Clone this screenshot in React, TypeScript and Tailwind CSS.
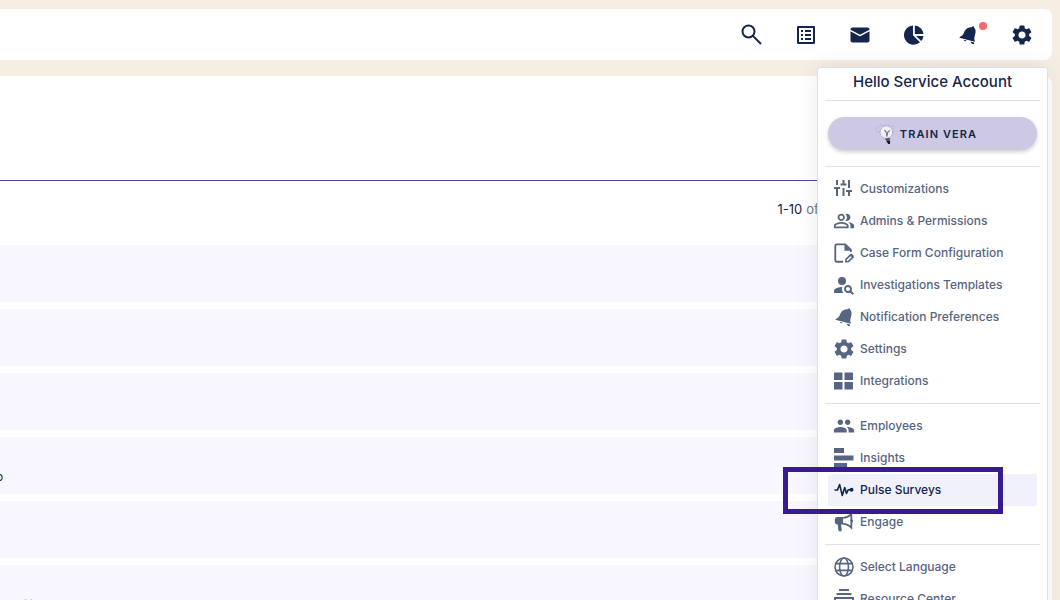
import React from 'react';
import { MdOutlineListAlt, MdOutlinePeopleAlt, MdPeople, MdPersonSearch, MdSettings } from 'react-icons/md';

interface IconProps {
    className?: string;
}

interface MenuItem {
    id: string;
    label: string;
    icon: React.FC<IconProps>;
    active?: boolean;
}

const SearchIcon: React.FC<IconProps> = ({ className }) => (
    <svg className={className} viewBox="0 0 24 24" fill="none" stroke="currentColor" strokeWidth="2">
        <circle cx="8.500" cy="8.500" r="6" />
        <path d="M12.900 12.900 21 21" />
    </svg>
);

const ListIcon: React.FC<IconProps> = ({ className }) => <MdOutlineListAlt className={className} />;

const MailIcon: React.FC<IconProps> = ({ className }) => (
    <svg className={className} viewBox="0 0 24 24" fill="currentColor">
        <path d="M4.500 4.500h15a2 2 0 0 1 2 2v.3L12 11.800 2.500 6.800v-.3a2 2 0 0 1 2-2Z" />
        <path d="m2.500 8.300 8.700 4.800a1.700 1.700 0 0 0 1.600 0l8.700-4.800v9.200a2 2 0 0 1-2 2h-15a2 2 0 0 1-2-2Z" />
    </svg>
);

const PieIcon: React.FC<IconProps> = ({ className }) => (
    <svg className={className} viewBox="0 0 24 24" fill="currentColor">
        <path d="M11 2.500V12.300l7 6.900A9.600 9.600 0 1 1 11 2.500Z" />
        <path d="M12.800 2.500a9.600 9.600 0 0 1 8.700 8.600h-8.700Z" />
        <path d="M14 12.900h7.500a9.600 9.600 0 0 1-2.300 5.100Z" />
    </svg>
);

const BellIcon: React.FC<IconProps> = ({ className }) => (
    <svg className={`${className} p-0.5`} viewBox="0 0 24 24" fill="currentColor">
        <path d="M18.300 1l1 2c1.700 1.800 2.200 4.300 1.600 6.700l-1.300 5.700c-.2 1-.1 2 .3 3l.4 1.600L1.500 15.200l1.500-1.300c1.500-.7 2.700-1.900 3.500-3.400l1.400-3.100c1.300-2.500 3.900-4.400 6.800-4.600l1.900-.1Z" />
        <path d="m6.800 17.800 3.500.9a2 2 0 0 1-3.500-.9Zm8.200 2 4.300 1.100-.3 2.200c-2-.1-3.500-1.500-4-3.300Z" />
    </svg>
);

const GearIcon: React.FC<IconProps> = ({ className }) => <MdSettings className={className} />;

const TuneIcon: React.FC<IconProps> = ({ className }) => (
    <svg className={className} viewBox="0 0 24 24" fill="none" stroke="currentColor" strokeWidth="2">
        <path d="M5 3v5M2 11h6M5 11v8" />
        <path d="M11.500 3v5M8.500 7.500h6M11.500 11v8" />
        <path d="M17 3v8M14 14h6M17 14v5" />
    </svg>
);

const AdminsIcon: React.FC<IconProps> = ({ className }) => <MdOutlinePeopleAlt className={`${className} p-px`} />;

const FormIcon: React.FC<IconProps> = ({ className }) => (
    <svg className={`${className} p-px`} viewBox="0 0 24 24">
        <path
            d="M11 21.500H4a1.500 1.500 0 0 1-1.500-1.500V4A1.500 1.500 0 0 1 4 2.500h9.500L19.500 8.500V11"
            fill="none"
            stroke="currentColor"
            strokeWidth="2"
        />
        <path d="M12.500 2.500v7h7Z" fill="currentColor" />
        <path d="m14 21.500.3-2.700 5-4.800 2.500 2.500-5 4.800Z" fill="none" stroke="currentColor" strokeWidth="1.800" />
        <path d="m18.800 14 1.500-1.500 2.500 2.700-1.300 1.500Z" fill="currentColor" />
    </svg>
);

const InvestigateIcon: React.FC<IconProps> = ({ className }) => <MdPersonSearch className={className} />;

const IntegrationsIcon: React.FC<IconProps> = ({ className }) => (
    <svg className={className} viewBox="0 0 24 24" fill="currentColor">
        <rect x="2" y="3.500" width="8.500" height="7.500" rx=".6" />
        <rect x="12.500" y="3.500" width="8.500" height="7.500" rx=".6" />
        <rect x="2" y="13" width="8.500" height="7.500" rx=".6" />
        <rect x="12.500" y="13" width="8.500" height="7.500" rx=".6" />
    </svg>
);

const EmployeesIcon: React.FC<IconProps> = ({ className }) => <MdPeople className={`${className} p-px`} />;

const InsightsIcon: React.FC<IconProps> = ({ className }) => (
    <svg className={className} viewBox="0 0 24 24" fill="currentColor">
        <path d="M2 2h10v5H2ZM2 9.500h19.500v5H2ZM2 17h13v5H2Z" />
    </svg>
);

const PulseIcon: React.FC<IconProps> = ({ className }) => (
    <svg className={className} viewBox="0 0 24 24" fill="none" stroke="currentColor" strokeWidth="1.600" strokeLinejoin="round">
        <path d="M2.500 12h3L7.600 6.500l2.700 11 2.400-8 1.800 6 1.800-3.800H19" />
        <circle cx="19.500" cy="11.800" r="2" fill="currentColor" stroke="none" />
    </svg>
);

const EngageIcon: React.FC<IconProps> = ({ className }) => (
    <svg className={`${className} p-px`} viewBox="0 0 24 24">
        <path
            d="M10 6.500H5a3 3 0 0 0-3 3v2.300a3 3 0 0 0 3 3l1 6.400a1 1 0 0 0 1 .8h1.600a1 1 0 0 0 1-1.200l-.9-6H11v-8.300Z"
            fill="currentColor"
        />
        <path d="M11 7.500c3 0 6.500-1.600 9-4v14.700c-2.500-2.500-6-4.200-9-4.200" fill="none" stroke="currentColor" strokeWidth="2" />
        <path d="M20 9a2 2 0 0 1 0 4Z" fill="currentColor" />
    </svg>
);

const GlobeIcon: React.FC<IconProps> = ({ className }) => (
    <svg className={`${className} p-px`} viewBox="0 0 24 24" fill="none" stroke="currentColor" strokeWidth="1.700">
        <circle cx="12" cy="12" r="9.800" />
        <ellipse cx="12" cy="12" rx="4.800" ry="9.800" />
        <path d="M3 8.300h18M3 15.700h18" />
    </svg>
);

const ResourceIcon: React.FC<IconProps> = ({ className }) => (
    <svg className={className} viewBox="0 0 24 24" fill="none" stroke="currentColor" strokeWidth="2">
        <path d="M7 3h10M4.500 7h15M3 11h18v9a1.500 1.500 0 0 1-1.500 1.500h-15A1.500 1.500 0 0 1 3 20ZM3 14h5a4 4 0 0 0 8 0h5" />
    </svg>
);

const BulbIcon: React.FC<IconProps> = ({ className }) => (
    <svg className={className} viewBox="0 0 24 24" fill="none">
        <path d="M9 9 5 10 2 8V5l5-2 7-1 7 1v7" stroke="#c6a9e8" strokeDasharray="2 1" />
        <circle cx="13.500" cy="10" r="6.800" fill="#f1f0f4" stroke="#8d8b98" strokeWidth=".8" strokeDasharray="1.500 1" />
        <path d="m11.500 7.500 2 3 .5 4.500 1-5 2.500-2" stroke="#77758a" strokeWidth="1.200" />
        <path d="m12 17 5-1 .5 3-4 1Z" fill="#55535f" />
        <path d="m13.500 20 4-1v4h-2Z" fill="#17151f" />
    </svg>
);

const toolbarItems: MenuItem[] = [
    { id: 'search', label: 'Search', icon: SearchIcon },
    { id: 'cases', label: 'Cases', icon: ListIcon },
    { id: 'mail', label: 'Messages', icon: MailIcon },
    { id: 'reports', label: 'Reports', icon: PieIcon },
    { id: 'alerts', label: 'Notifications', icon: BellIcon },
    { id: 'account', label: 'Account menu', icon: GearIcon },
];

const menuGroups: MenuItem[][] = [
    [
        { id: 'customizations', label: 'Customizations', icon: TuneIcon },
        { id: 'admins', label: 'Admins & Permissions', icon: AdminsIcon },
        { id: 'case-form', label: 'Case Form Configuration', icon: FormIcon },
        { id: 'templates', label: 'Investigations Templates', icon: InvestigateIcon },
        { id: 'preferences', label: 'Notification Preferences', icon: BellIcon },
        { id: 'settings', label: 'Settings', icon: GearIcon },
        { id: 'integrations', label: 'Integrations', icon: IntegrationsIcon },
    ],
    [
        { id: 'employees', label: 'Employees', icon: EmployeesIcon },
        { id: 'insights', label: 'Insights', icon: InsightsIcon },
        { id: 'pulse', label: 'Pulse Surveys', icon: PulseIcon, active: true },
        { id: 'engage', label: 'Engage', icon: EngageIcon },
    ],
    [
        { id: 'language', label: 'Select Language', icon: GlobeIcon },
        { id: 'resources', label: 'Resource Center', icon: ResourceIcon },
    ],
];

const rows = ['', '', '', 'o', '', 'ili'];

const Toolbar: React.FC = () => (
    <header className="flex h-[51px] shrink-0 items-center justify-end gap-[30px] rounded-r-lg bg-white pr-[18px]">
        {toolbarItems.map(({ id, label, icon: Icon }) => (
            <button key={id} type="button" aria-label={label} className="relative size-6 text-[#14264b]">
                <Icon className="size-6" />
                {id === 'alerts' && (
                    <span className="absolute -top-px -right-[7px] size-2 rounded-full bg-[#f26a6a]"></span>
                )}
            </button>
        ))}
    </header>
);

const CaseList: React.FC = () => (
    <main className="mt-4 flex-1 rounded-tr-lg bg-white pr-4">
        <div className="h-[105px] border-b border-[#55459a]"></div>
        <div className="flex h-16 items-center justify-end pr-[200px] pb-1.5 text-[13px] text-[#6b7590]">
            <span className="text-[#14264b]">1-10</span>
            <span className="ml-1">of 10</span>
        </div>
        <ul className="space-y-[7px]">
            {rows.map((text, index) => (
                <li key={index} className="h-[57px] bg-[#f8f7ff] text-xs text-[#14264b]">
                    {text === 'o' && <p className="-ml-1 pt-8 leading-4">{text}</p>}
                    {text === 'ili' && <p className="pt-8 pl-6 leading-4 text-[#586582]">{text}</p>}
                </li>
            ))}
        </ul>
    </main>
);

const AccountMenu: React.FC = () => (
    <aside className="absolute top-[67px] right-3 w-[231px] rounded-[3px] border border-[#d8e1f0] bg-white px-[7px] shadow-[0_0_24px_rgba(20,20,60,0.08)]">
        <h2 className="h-8 text-center text-[15px] leading-7 font-medium text-[#14264b]">Hello Service Account</h2>
        <div className="border-y border-[#e2e3e6] px-[3px] py-4">
            <button
                type="button"
                className="flex h-[33px] w-full items-center justify-center gap-1 rounded-full bg-[#cdc9e5] pt-px pr-3.5 text-[11px] font-semibold tracking-widest text-[#14264b] shadow-[0_2px_4px_rgba(0,0,0,0.2)]"
            >
                <BulbIcon className="size-[22px]" />
                <span>TRAIN VERA</span>
            </button>
        </div>
        {menuGroups.map((group, index) => (
            <ul key={index} className="border-b border-[#e2e3e6] px-[3px] py-1.5">
                {group.map(({ id, label, icon: Icon, active }) => (
                    <li key={id} className={active ? 'relative z-10' : ''}>
                        <a
                            href="#"
                            className={`flex h-8 items-center gap-1 rounded-xs pl-1 text-xs font-medium ${
                                active ? 'bg-[#f1f1fb] text-[#14264b]' : 'text-[#586582]'
                            }`}
                        >
                            <Icon className="size-6 shrink-0" />
                            <span>{label}</span>
                        </a>
                        {active && (
                            <span className="pointer-events-none absolute -top-[7px] -left-[45px] h-[47px] w-[220px] border-[5px] border-[#371a94]"></span>
                        )}
                    </li>
                ))}
            </ul>
        ))}
    </aside>
);

export default function App() {
    return (
        <div className="relative flex h-screen flex-col overflow-hidden bg-[#f6ede3] pt-[9px] pr-2 font-['Inter','Noto_Sans',sans-serif]">
            <Toolbar />
            <CaseList />
            <AccountMenu />
        </div>
    );
}
